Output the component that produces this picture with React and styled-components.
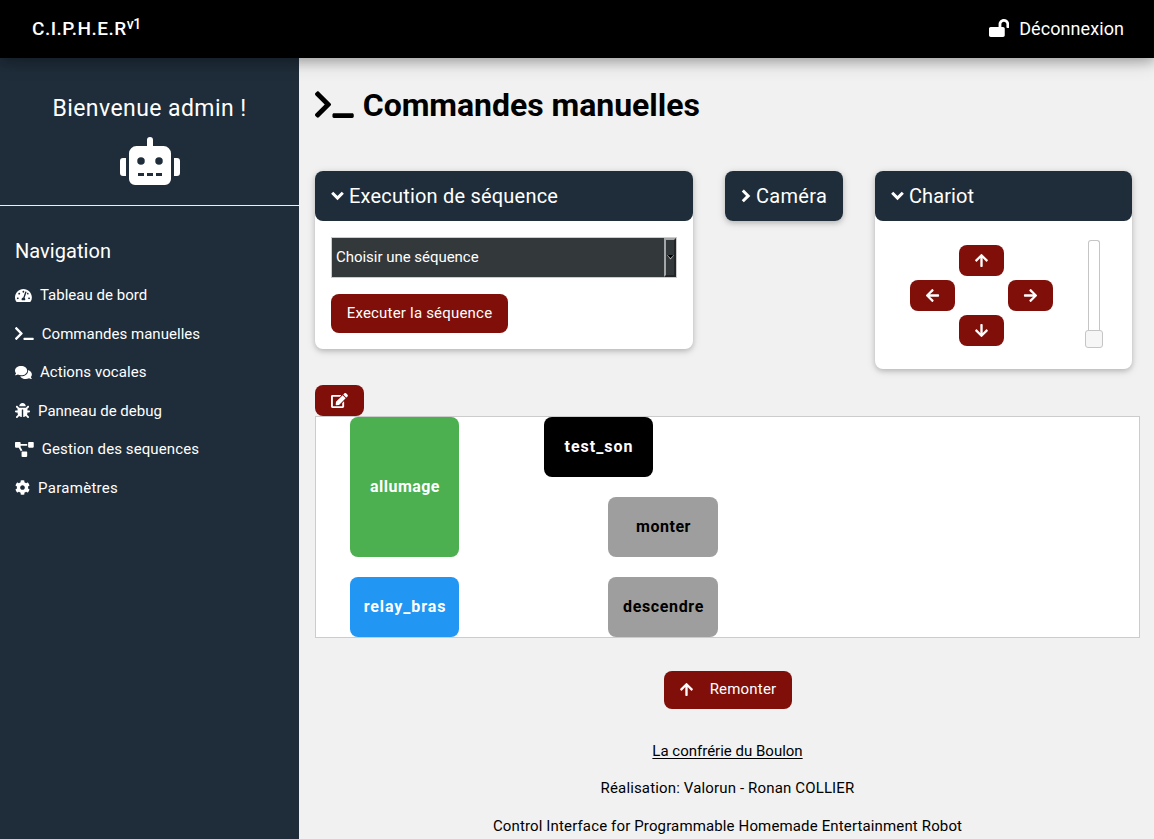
import React from "react";
import styled, { createGlobalStyle } from "styled-components";
import {
  FaTachometerAlt, FaTerminal, FaComments, FaBug, FaProjectDiagram, FaCog, FaRobot,
  FaLockOpen, FaEdit, FaArrowUp, FaArrowDown, FaArrowLeft, FaArrowRight,
} from "react-icons/fa";

const GlobalStyle = createGlobalStyle`
  *, *::before, *::after { box-sizing: border-box; }
  body { margin: 0; background: #f1f1f1; }
  body, button { font-family: Roboto, "Liberation Sans", sans-serif; font-size: 15px; line-height: 1.5; }
  svg { display: block; flex: none; }
`;

const Page = styled.div`
  height: 839px;
  overflow: hidden;
  display: flex;
  flex-direction: column;
  color: #000;
`;
const Icon = styled.span`
  flex: none;
  font-size: ${(p) => p.$size || 15}px;
  line-height: 1;
  svg { height: 1em; width: ${(p) => p.$ratio || 1}em; }
`;
const TopBar = styled.header`
  position: relative;
  z-index: 2;
  flex: none;
  height: 58px;
  padding: 0 30px 0 32px;
  display: flex;
  align-items: center;
  justify-content: space-between;
  background: #000;
  color: #fff;
  font-size: 18px;
  box-shadow: 0 4px 10px 0 rgba(0,0,0,0.2), 0 4px 20px 0 rgba(0,0,0,0.19);
`;
const Label = styled.span`
  letter-spacing: ${(p) => p.$track || 0}px;
  white-space: nowrap;
`;
const Brand = styled.div`
  font-weight: 500;
  font-size: 19px;
  line-height: 28px;
  sup { font-size: 14px; line-height: 0; vertical-align: 6px; letter-spacing: -0.4px; }
`;
const Logout = styled.a`
  display: flex;
  align-items: center;
  gap: 10px;
  padding-bottom: 2px;
`;
const Body = styled.div`
  flex: 1;
  min-height: 0;
  display: flex;
`;
const Sidebar = styled.aside`
  flex: none;
  width: 299px;
  background: #1f2d3a;
  color: #fff;
`;
const Welcome = styled.div`
  height: 148px;
  padding-top: 33px;
  display: flex;
  flex-direction: column;
  align-items: center;
  gap: 10px;
  border-bottom: 1px solid #eee;
  font-size: 23px;
  line-height: 36px;
`;
const NavTitle = styled.h5`
  margin: 0;
  padding: 30px 16px 10px 15px;
  font-size: 20px;
  font-weight: 400;
  line-height: 30px;
`;
const NavItem = styled.a`
  display: flex;
  align-items: center;
  gap: 8px;
  height: 38.5px;
  padding-left: 15px;
`;
const Main = styled.main`
  flex: 1;
  min-width: 0;
  padding: 0 14px 0 16px;
`;
const Title = styled.h1`
  margin: 0;
  height: 113px;
  padding-top: 24px;
  display: flex;
  align-items: flex-start;
  gap: 9px;
  font-size: 32px;
  font-weight: 700;
  line-height: 46px;
  ${Icon} { margin-top: 7px; }
`;
const Panels = styled.section`
  display: flex;
  align-items: flex-start;
  gap: 32px;
  height: 214px;
`;
const Card = styled.article`
  flex: none;
  width: ${(p) => p.$width}px;
  background: #fff;
  border-radius: 8px;
  box-shadow: 0 2px 5px 0 rgba(0,0,0,0.16), 0 2px 10px 0 rgba(0,0,0,0.12);
`;
const CardHeader = styled.header`
  height: 50px;
  padding: 0 16px;
  display: flex;
  align-items: center;
  gap: 4px;
  border-radius: 8px;
  background: #1f2d3a;
  color: #fff;
  font-size: 20px;
`;
const FormBody = styled.div`
  padding: 16px;
  display: flex;
  flex-direction: column;
  align-items: flex-start;
  gap: 16px;
`;
const Select = styled.div`
  width: 346px;
  height: 41px;
  display: flex;
  align-items: center;
  justify-content: space-between;
  padding-left: 4px;
  border: 1px solid #ccc;
  background: #33383b;
  color: #fff;
`;
const SelectArrow = styled.span`
  width: 12px;
  height: 39px;
  display: flex;
  align-items: center;
  justify-content: center;
  border: 2px solid;
  border-color: #a4a6a7 #222628 #222628 #a4a6a7;
`;
const Button = styled.button`
  display: inline-flex;
  align-items: center;
  justify-content: center;
  gap: 16px;
  width: ${(p) => p.$width || 45}px;
  height: ${(p) => p.$height || 31}px;
  padding: 0 0 1px;
  border: 0;
  border-radius: 8px;
  background: #800f0a;
  color: #fff;
  white-space: nowrap;
`;
const CartBody = styled.div`
  display: flex;
  justify-content: space-between;
  height: 148px;
  padding: 19px 29px 0 35px;
`;
const Pad = styled.div`
  display: grid;
  grid-template-columns: repeat(3, 45px);
  grid-template-rows: repeat(3, 31px);
  gap: 4px;
  padding-top: 5px;
  ${Button}:nth-child(1) { grid-area: 1 / 2; }
  ${Button}:nth-child(2) { grid-area: 2 / 1; }
  ${Button}:nth-child(3) { grid-area: 2 / 3; }
  ${Button}:nth-child(4) { grid-area: 3 / 2; }
`;
const Slider = styled.div`
  width: 18px;
  display: flex;
  flex-direction: column;
  align-items: center;
`;
const Track = styled.div`
  width: 12px;
  height: 90px;
  border: 1px solid #c5c5c5;
  border-bottom: 0;
  border-radius: 3px 3px 0 0;
`;
const Handle = styled.div`
  width: 18px;
  height: 18px;
  border: 1px solid #c5c5c5;
  border-radius: 3px;
  background: #f6f6f6;
`;
const Editor = styled.section`
  display: flex;
  flex-direction: column;
  align-items: flex-start;
`;
const Canvas = styled.div`
  position: relative;
  width: 825px;
  height: 222px;
  border: 1px solid #ccc;
  background: #fff;
`;
const Block = styled.div`
  position: absolute;
  left: ${(p) => p.$x}px;
  top: ${(p) => p.$y}px;
  width: ${(p) => p.$w}px;
  height: ${(p) => p.$h}px;
  display: flex;
  align-items: center;
  justify-content: center;
  padding-left: 1px;
  border-radius: 8px;
  background: ${(p) => p.$bg};
  color: ${(p) => p.$fg};
  font-size: 16px;
  font-weight: 700;
`;
const Footer = styled.footer`
  display: flex;
  flex-direction: column;
  align-items: center;
  padding-top: 33px;
  p { margin: 15px 0 0; line-height: 22.5px; }
  p:first-of-type { margin-top: 30.6px; text-decoration: underline; text-underline-offset: 2px; }
`;

const ChevronDown = () => (
  <svg width="14" height="14" viewBox="0 0 14 14" fill="none" stroke="currentColor" strokeWidth="3">
    <path d="M1.2 3.8L6.5 9.1L11.8 3.8" />
  </svg>
);
const ChevronRight = () => (
  <svg width="11" height="14" viewBox="0 0 11 14" fill="none" stroke="currentColor" strokeWidth="3">
    <path d="M1.8 1.5L7.2 6.9L1.8 12.3" />
  </svg>
);

const links = [
  [FaTachometerAlt, "Tableau de bord", 0.03, 1.125],
  [FaTerminal, "Commandes manuelles", 0.03, 1.25],
  [FaComments, "Actions vocales", 0.07, 1.125],
  [FaBug, "Panneau de debug", 0, 1],
  [FaProjectDiagram, "Gestion des sequences", 0.1, 1.25],
  [FaCog, "Paramètres", 0.3, 1],
];
const blocks = [
  ["allumage", 34, 0, 109, 140, "#4caf50", "#fff", 0.45],
  ["relay_bras", 34, 160, 109, 60, "#2196f3", "#fff", 0.9],
  ["test_son", 228, 0, 109, 60, "#000", "#fff", 1],
  ["monter", 292, 80, 110, 60, "#9e9e9e", "#000", 0.5],
  ["descendre", 292, 160, 110, 60, "#9e9e9e", "#000", 0.65],
];

export default function App() {
  return (
    <Page>
      <GlobalStyle />
      <TopBar>
        <Brand><Label $track={0.5}>C.I.P.H.E.R</Label><sup>v1</sup></Brand>
        <Logout><Icon $size={18} $ratio={1.125}><FaLockOpen /></Icon><Label $track={0.07}>Déconnexion</Label></Logout>
      </TopBar>
      <Body>
        <Sidebar>
          <Welcome>
            <Label $track={0.42}>Bienvenue admin !</Label>
            <Icon $size={48} $ratio={1.25}><FaRobot /></Icon>
          </Welcome>
          <NavTitle><Label $track={0.05}>Navigation</Label></NavTitle>
          {links.map(([Glyph, text, track, ratio]) => (
            <NavItem key={text}><Icon $ratio={ratio}><Glyph /></Icon><Label $track={track}>{text}</Label></NavItem>
          ))}
        </Sidebar>
        <Main>
          <Title><Icon $size={31} $ratio={1.25}><FaTerminal /></Icon><Label $track={-0.04}>Commandes manuelles</Label></Title>
          <Panels>
            <Card $width={378}>
              <CardHeader><ChevronDown /><Label $track={0.2}>Execution de séquence</Label></CardHeader>
              <FormBody>
                <Select>
                  <Label $track={-0.03}>Choisir une séquence</Label>
                  <SelectArrow>
                    <svg width="7" height="5" viewBox="0 0 7 5"><path d="M0 0h7L3.5 4.5z" fill="#bbb" /><path d="M0.5 0h6L3.5 3.2z" fill="#000" /></svg>
                  </SelectArrow>
                </Select>
                <Button $width={177} $height={39}><Label $track={0.2}>Executer la séquence</Label></Button>
              </FormBody>
            </Card>
            <Card $width={118}>
              <CardHeader><ChevronRight /><Label $track={0.3}>Caméra</Label></CardHeader>
            </Card>
            <Card $width={257}>
              <CardHeader><ChevronDown /><Label $track={0.1}>Chariot</Label></CardHeader>
              <CartBody>
                <Pad>
                  <Button><Icon><FaArrowUp /></Icon></Button>
                  <Button><Icon><FaArrowLeft /></Icon></Button>
                  <Button><Icon><FaArrowRight /></Icon></Button>
                  <Button><Icon><FaArrowDown /></Icon></Button>
                </Pad>
                <Slider><Track /><Handle /></Slider>
              </CartBody>
            </Card>
          </Panels>
          <Editor>
            <Button $width={49}><Icon $ratio={1.125}><FaEdit /></Icon></Button>
            <Canvas>
              {blocks.map(([text, x, y, w, h, bg, fg, track]) => (
                <Block key={text} $x={x} $y={y} $w={w} $h={h} $bg={bg} $fg={fg}><Label $track={track}>{text}</Label></Block>
              ))}
            </Canvas>
          </Editor>
          <Footer>
            <Button $width={128} $height={38}><Icon><FaArrowUp /></Icon><Label $track={0.2}>Remonter</Label></Button>
            <p><Label>La confrérie du Boulon</Label></p>
            <p><Label $track={0.15}>Réalisation: Valorun - Ronan COLLIER</Label></p>
            <p><Label $track={0.14}>Control Interface for Programmable Homemade Entertainment Robot</Label></p>
          </Footer>
        </Main>
      </Body>
    </Page>
  );
}
